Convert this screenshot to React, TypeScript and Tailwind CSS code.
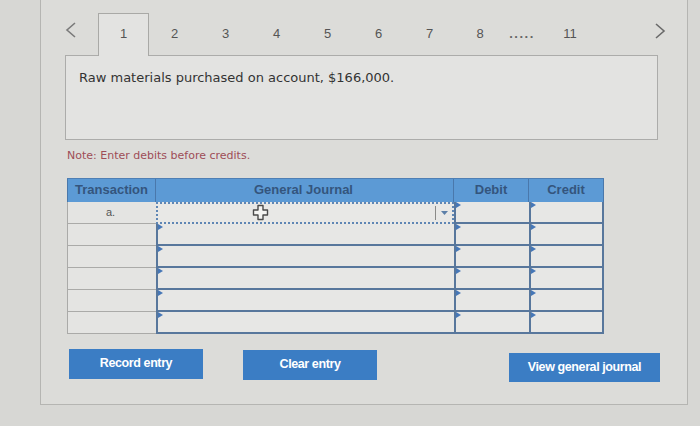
import React from 'react';

const tabNums = ['2', '3', '4', '5', '6', '7'];

const Flag: React.FC = () => (
  <svg className="absolute left-0 top-0" width="5" height="6" viewBox="0 0 5 6">
    <path d="M0 0 L5 3 L0 6 Z" fill="#4677b6" />
  </svg>
);

const MoveCursor: React.FC = () => (
  <svg width="17" height="17" viewBox="0 0 17 17">
    <path
      d="M6 1.5 H11 V6 H15.5 V11 H11 V15.5 H6 V11 H1.5 V6 H6 Z"
      fill="#f4f4f2"
      stroke="#4a4a4a"
      strokeWidth="1.4"
      strokeLinejoin="round"
    />
  </svg>
);

const InputCell: React.FC<{ w: string; last?: boolean }> = ({ w, last }) => (
  <div
    className={`relative ${w} h-full bg-[#e7e7e5] border-l-2 border-b-2 border-[#58779c] ${last ? 'border-r-2' : ''}`}
  >
    <Flag />
  </div>
);

export default function App() {
  return (
    <div className="w-[700px] h-[426px] bg-[#d7d7d4] overflow-hidden" style={{ fontFamily: '"Liberation Sans", Arial, sans-serif' }}>
      <div className="ml-[40px] w-[648px] h-[405px] bg-[#dcdcd9] border-l border-r border-b border-[#b5b5b2] pt-[13px]">
        {/* Question tabs */}
        <div className="ml-[24px] w-[606px] h-[42px] flex items-stretch text-[13px] text-[#555]">
          <div className="w-[33px] flex items-center">
            <svg width="12" height="16" viewBox="0 0 12 16" className="mt-[-8px]">
              <polyline points="10,1 2,8 10,15" fill="none" stroke="#7a7a7a" strokeWidth="1.6" />
            </svg>
          </div>
          <div className="relative z-10 w-[51px] h-[43px] bg-[#e3e3e1] border-l border-t border-r border-[#a9a9a6] flex justify-center pt-[10px]">
            1
          </div>
          {tabNums.map((n) => (
            <div key={n} className="w-[51px] flex justify-center pt-[11px]">
              {n}
            </div>
          ))}
          <div className="w-[50px] flex justify-center pt-[11px]">8</div>
          <div className="w-[34px] flex justify-center pt-[11px] text-[#666] tracking-[1.5px] font-bold">.....</div>
          <div className="w-[62px] flex justify-center pt-[11px]">11</div>
          <div className="flex-1 flex justify-end items-center pr-[5px]">
            <svg width="12" height="16" viewBox="0 0 12 16" className="mt-[-6px]">
              <polyline points="2,1 10,8 2,15" fill="none" stroke="#6a6a6a" strokeWidth="1.6" />
            </svg>
          </div>
        </div>

        {/* Question box */}
        <div
          className="ml-[24px] w-[593px] h-[85px] bg-[#e3e3e1] border border-[#acacaa] pl-[13px] pt-[12px] text-[13px] text-[#333]"
          style={{ fontFamily: '"DejaVu Sans", Verdana, sans-serif' }}
        >
          Raw materials purchased on account, $166,000.
        </div>

        <div
          className="ml-[26px] mt-[8px] text-[11px] text-[#9e4d57]"
          style={{ fontFamily: '"DejaVu Sans", Verdana, sans-serif' }}
        >
          Note: Enter debits before credits.
        </div>

        {/* Journal table */}
        <div className="ml-[26px] mt-[13px] w-[537px]">
          <div className="flex h-[24px] bg-[#5c9ad5] border-t border-[#4f7fb4] text-[13px] text-[#34557d] font-bold">
            <div className="w-[89px] flex items-center justify-center border-l border-r border-[#4a78ab]">Transaction</div>
            <div className="w-[298px] flex items-center justify-center border-r border-[#4a78ab] pr-[2px]">General Journal</div>
            <div className="w-[75px] flex items-center justify-center border-r border-[#4a78ab]">Debit</div>
            <div className="w-[75px] flex items-center justify-center border-r border-[#4a78ab]">Credit</div>
          </div>

          {/* first row with focused select */}
          <div className="flex h-[22px]">
            <div className="w-[89px] bg-[#e4e4e2] border-l border-b border-[#aaaaa8] flex items-center justify-center text-[11px] text-[#555] pr-[3px]">
              a.
            </div>
            <div className="relative w-[298px] h-full bg-[#e8e8e6] border-2 border-dotted border-[#5f86b4] flex items-center">
              <div className="flex-1 flex justify-center pr-[72px]">
                <MoveCursor />
              </div>
              <div className="h-[14px] w-px bg-[#8a8a88]" />
              <div className="w-[16px] flex justify-center">
                <svg width="7" height="4" viewBox="0 0 7 4">
                  <path d="M0 0 H7 L3.5 4 Z" fill="#5c7fa8" />
                </svg>
              </div>
            </div>
            <InputCell w="w-[75px]" />
            <InputCell w="w-[75px]" last />
          </div>

          {[0, 1, 2, 3, 4].map((r) => (
            <div key={r} className="flex h-[22px]">
              <div className="w-[89px] bg-[#e4e4e2] border-l border-b border-[#aaaaa8]" />
              <InputCell w="w-[298px]" />
              <InputCell w="w-[75px]" />
              <InputCell w="w-[75px]" last />
            </div>
          ))}
        </div>

        {/* Buttons */}
        <div className="ml-[28px] mt-[15px] flex items-start text-[12.5px] font-bold text-white tracking-[-0.4px]">
          <button className="w-[134px] h-[30px] bg-[#3b7dc4] flex items-center justify-center">Record entry</button>
          <button className="ml-[40px] mt-[1px] w-[134px] h-[30px] bg-[#3b7dc4] flex items-center justify-center">Clear entry</button>
          <button className="ml-[132px] mt-[4px] w-[151px] h-[29px] bg-[#3b7dc4] flex items-center justify-center">View general journal</button>
        </div>
      </div>
    </div>
  );
}
